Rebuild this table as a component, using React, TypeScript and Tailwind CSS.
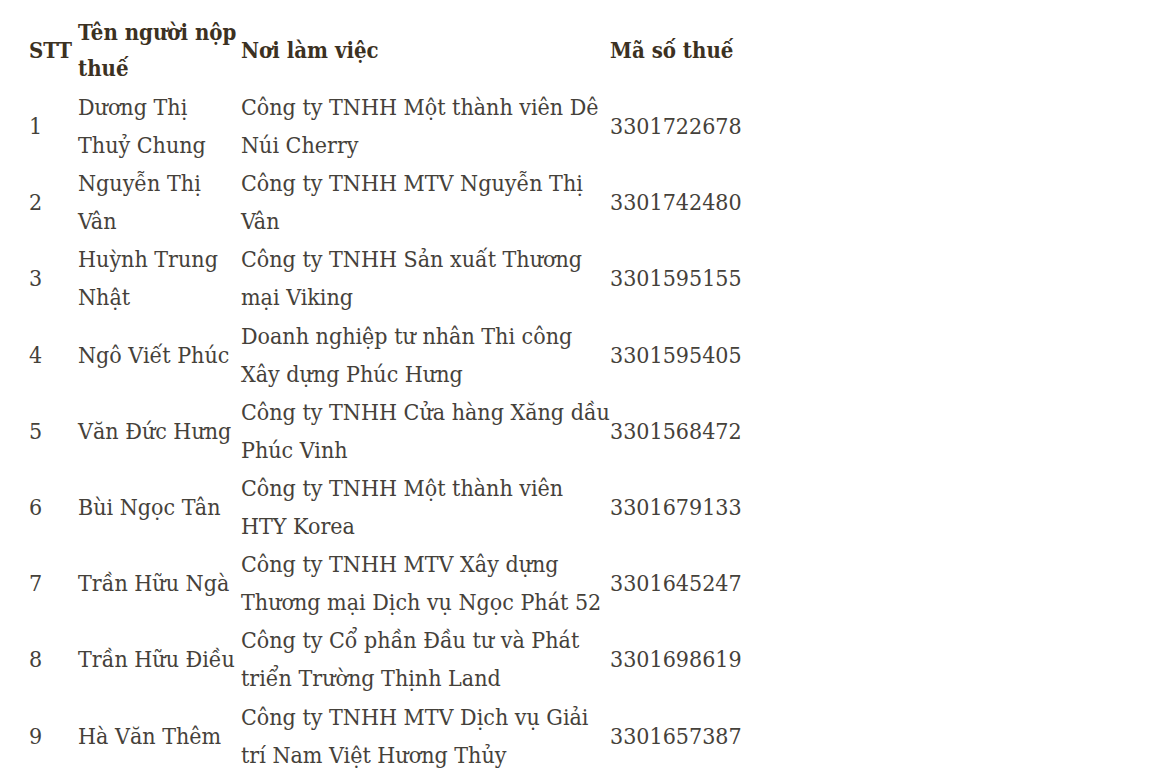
const rows = [
  ['1', 'Dương Thị Thuỷ Chung', 'Công ty TNHH Một thành viên Dê Núi Cherry', '3301722678'],
  ['2', 'Nguyễn Thị Vân', 'Công ty TNHH MTV Nguyễn Thị Vân', '3301742480'],
  ['3', 'Huỳnh Trung Nhật', 'Công ty TNHH Sản xuất Thương mại Viking', '3301595155'],
  ['4', 'Ngô Viết Phúc', 'Doanh nghiệp tư nhân Thi công Xây dựng Phúc Hưng', '3301595405'],
  ['5', 'Văn Đức Hưng', 'Công ty TNHH Cửa hàng Xăng dầu Phúc Vinh', '3301568472'],
  ['6', 'Bùi Ngọc Tân', 'Công ty TNHH Một thành viên HTY Korea', '3301679133'],
  ['7', 'Trần Hữu Ngà', 'Công ty TNHH MTV Xây dựng Thương mại Dịch vụ Ngọc Phát 52', '3301645247'],
  ['8', 'Trần Hữu Điều', 'Công ty Cổ phần Đầu tư và Phát triển Trường Thịnh Land', '3301698619'],
  ['9', 'Hà Văn Thêm', 'Công ty TNHH MTV Dịch vụ Giải trí Nam Việt Hương Thủy', '3301657387'],
];

export default function App() {
  return (
    <div className="min-h-screen bg-white pl-[29px] pt-[12px] font-['DejaVu_Serif_Condensed','DejaVu_Serif',serif]">
      <table className="table-fixed border-collapse text-[23px] leading-[38px] text-[#45413a]">
        <colgroup>
          <col className="w-[49px]" />
          <col className="w-[163px]" />
          <col className="w-[369px]" />
          <col className="w-[150px]" />
        </colgroup>
        <thead>
          <tr className="h-[76px] text-left text-[22px] font-bold text-[#3c3122]">
            <th className="p-0 align-middle">STT</th>
            <th className="whitespace-nowrap p-0 align-middle leading-[36px]">
              Tên người nộp
              <br />
              thuế
            </th>
            <th className="p-0 align-middle">Nơi làm việc</th>
            <th className="p-0 align-middle">Mã số thuế</th>
          </tr>
        </thead>
        <tbody>
          {rows.map(([stt, name, place, tax]) => (
            <tr key={stt} className="h-[76.2px]">
              <td className="p-0 align-middle">{stt}</td>
              <td className="p-0 align-middle">{name}</td>
              <td className="p-0 align-middle">{place}</td>
              <td className="p-0 align-middle">{tax}</td>
            </tr>
          ))}
        </tbody>
      </table>
    </div>
  );
}
